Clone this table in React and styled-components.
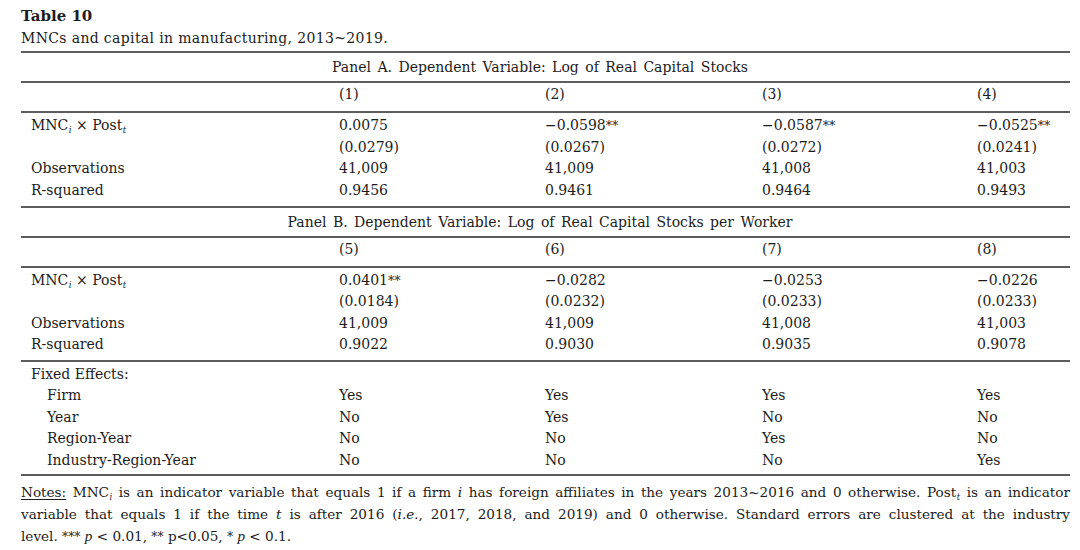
import React from "react";
import styled, { createGlobalStyle } from "styled-components";

const GlobalStyle = createGlobalStyle`
  html, body {
    margin: 0;
    padding: 0;
    background: #ffffff;
  }
  body {
    font-family: "DejaVu Serif", "Liberation Serif", serif;
    color: #1c1c1c;
  }
`;

const COLS = "318px 206px 217px 215px 1fr";
const RULE = "2px solid #5c5c5c";

const Page = styled.div`
  width: 1080px;
  height: 550px;
  box-sizing: border-box;
  padding: 7px 10px 0 21px;
  overflow: hidden;
`;

const Title = styled.div`
  font-weight: bold;
  font-size: 15px;
  line-height: 18px;
`;

const Caption = styled.div`
  font-size: 14px;
  line-height: 20px;
  margin-top: 3px;
  letter-spacing: 0.35px;
`;

const Table = styled.div`
  margin-top: 3px;
  border-top: ${RULE};
  font-size: 14px;
`;

const PanelHead = styled.div`
  height: 28px;
  display: flex;
  align-items: center;
  justify-content: center;
  padding-right: 11px;
  word-spacing: 2px;
  border-bottom: ${RULE};
`;

const Group = styled.div`
  padding: ${(p) => p.$pad || "0"};
  border-bottom: ${RULE};
`;

const Row = styled.div`
  display: grid;
  grid-template-columns: ${COLS};
  height: ${(p) => p.$h || 21.4}px;
  align-items: center;
  white-space: nowrap;
`;

const Label = styled.div`
  padding-left: ${(p) => (p.$indent ? 26 : 10)}px;
`;

const Cell = styled.div``;

const Sub = styled.sub`
  font-size: 0.62em;
  font-style: italic;
  vertical-align: -0.3em;
  line-height: 0;
  margin-left: 0.5px;
`;

const Notes = styled.div`
  margin-top: 6px;
  font-size: 13.6px;
  line-height: 21.5px;
`;

const NoteLine = styled.div`
  text-align: justify;
  text-align-last: ${(p) => (p.$last ? "left" : "justify")};
`;

const Under = styled.span`
  text-decoration: underline;
  text-underline-offset: 2px;
`;

const Ital = styled.i``;

const Stars = styled.span`
  font-size: 0.9em;
`;

const MathP = styled.i`
  font-family: "Liberation Serif", serif;
  font-size: 1.12em;
`;

const panels = [
  {
    title: "Panel A. Dependent Variable: Log of Real Capital Stocks",
    heads: ["(1)", "(2)", "(3)", "(4)"],
    coef: ["0.0075", "−0.0598**", "−0.0587**", "−0.0525**"],
    se: ["(0.0279)", "(0.0267)", "(0.0272)", "(0.0241)"],
    obs: ["41,009", "41,009", "41,008", "41,003"],
    r2: ["0.9456", "0.9461", "0.9464", "0.9493"],
  },
  {
    title: "Panel B. Dependent Variable: Log of Real Capital Stocks per Worker",
    heads: ["(5)", "(6)", "(7)", "(8)"],
    coef: ["0.0401**", "−0.0282", "−0.0253", "−0.0226"],
    se: ["(0.0184)", "(0.0232)", "(0.0233)", "(0.0233)"],
    obs: ["41,009", "41,009", "41,008", "41,003"],
    r2: ["0.9022", "0.9030", "0.9035", "0.9078"],
  },
];

const fixedEffects = [
  ["Firm", ["Yes", "Yes", "Yes", "Yes"]],
  ["Year", ["No", "Yes", "No", "No"]],
  ["Region-Year", ["No", "No", "Yes", "No"]],
  ["Industry-Region-Year", ["No", "No", "No", "Yes"]],
];

// split "−0.0598**" into number and stars so the stars can sit smaller
const Value = ({ v }) => {
  const m = /^(.*?)(\*+)$/.exec(v);
  if (!m) return v;
  return (
    <>
      {m[1]}
      <Stars>{m[2]}</Stars>
    </>
  );
};

const DataRow = ({ label, values, indent, h }) => (
  <Row $h={h}>
    <Label $indent={indent}>{label}</Label>
    {values.map((v, i) => (
      <Cell key={i}>
        <Value v={v} />
      </Cell>
    ))}
    <Cell />
  </Row>
);

const Panel = ({ panel }) => (
  <>
    <PanelHead>{panel.title}</PanelHead>
    <Group>
      <DataRow label="" values={panel.heads} h={28} />
    </Group>
    <Group $pad="3px 0 4px">
      <DataRow
        label={
          <>
            MNC<Sub>i</Sub> × Post<Sub>t</Sub>
          </>
        }
        values={panel.coef}
      />
      <DataRow label="" values={panel.se} />
      <DataRow label="Observations" values={panel.obs} />
      <DataRow label="R-squared" values={panel.r2} />
    </Group>
  </>
);

const App = () => {
  return (
    <>
      <GlobalStyle />
      <Page>
        <Title>Table 10</Title>
        <Caption>MNCs and capital in manufacturing, 2013~2019.</Caption>

        <Table>
          {panels.map((p) => (
            <Panel key={p.title} panel={p} />
          ))}
          <Group $pad="2px 0 2px">
            <DataRow label="Fixed Effects:" values={["", "", "", ""]} h={21.6} />
            {fixedEffects.map(([name, vals]) => (
              <DataRow key={name} label={name} values={vals} indent h={21.6} />
            ))}
          </Group>
        </Table>

        <Notes>
          <NoteLine>
            <Under>Notes:</Under> MNC<Sub>i</Sub> is an indicator variable that
            equals 1 if a firm <Ital>i</Ital> has foreign affiliates in the years
            2013~2016 and 0 otherwise. Post<Sub>t</Sub> is an indicator
          </NoteLine>
          <NoteLine>
            variable that equals 1 if the time <Ital>t</Ital> is after 2016 (
            <Ital>i.e.</Ital>, 2017, 2018, and 2019) and 0 otherwise. Standard
            errors are clustered at the industry
          </NoteLine>
          <NoteLine $last>
            level. <Stars>***</Stars> <MathP>p</MathP> &lt; 0.01,{" "}
            <Stars>**</Stars> p&lt;0.05, <Stars>*</Stars> <MathP>p</MathP>{" "}
            &lt; 0.1.
          </NoteLine>
        </Notes>
      </Page>
    </>
  );
};

export default App;
